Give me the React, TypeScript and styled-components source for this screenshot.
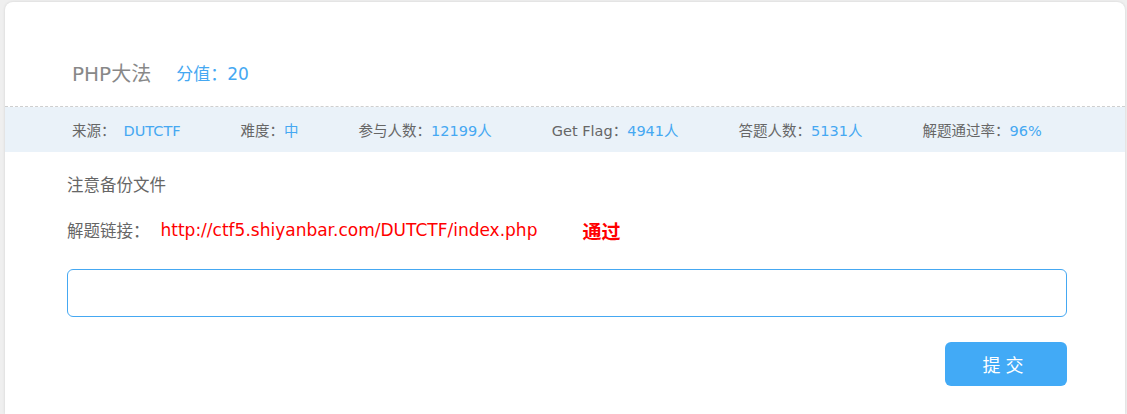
import styled, { createGlobalStyle } from 'styled-components';

const GlobalStyle = createGlobalStyle`
  html, body {
    margin: 0;
    padding: 0;
    background: #efefef;
    font-family: "DejaVu Sans", "Noto Sans CJK SC", sans-serif;
  }
`;

const Page = styled.div`
  padding: 2px 0 0 5px;
  height: 412px;
  overflow: hidden;
`;

const Card = styled.div`
  background: #fff;
  border-radius: 8px 8px 0 0;
  box-shadow: 0 0 3px rgba(0, 0, 0, 0.12);
  height: 100%;
  width: 1120px;
`;

const Header = styled.div`
  display: flex;
  align-items: center;
  gap: 25px;
  padding: 37px 0 0 67px;
  height: 67px;
  border-bottom: 1px dashed #cfcfcf;
`;

const Title = styled.span`
  font-size: 20px;
  color: #888;
`;

const Score = styled.span`
  font-size: 17px;
  color: #45a8f2;
`;

const InfoBar = styled.div`
  display: flex;
  align-items: center;
  height: 45px;
  padding-left: 67px;
  background: #eaf2f9;
  font-size: 14.5px;
`;

const InfoItem = styled.div`
  margin-right: 60px;
  color: #666;
  white-space: nowrap;
`;

const Value = styled.span<{ $gap?: boolean }>`
  color: #45a8f2;
  margin-left: ${(p) => (p.$gap ? '8px' : '0')};
`;

const Body = styled.div`
  padding: 20px 0 0 62px;
`;

const Note = styled.div`
  font-size: 16.5px;
  color: #666;
  height: 24px;
`;

const LinkRow = styled.div`
  display: flex;
  align-items: center;
  margin-top: 22px;
  font-size: 16.5px;
  color: #666;
  height: 24px;
`;

const Link = styled.a`
  color: #ff0000;
  text-decoration: none;
  font-size: 17px;
  margin-left: 11px;
`;

const Pass = styled.span`
  color: #ff0000;
  font-weight: bold;
  font-size: 19px;
  margin-left: 45px;
`;

const FlagInput = styled.input`
  display: block;
  box-sizing: border-box;
  width: 1000px;
  height: 48px;
  margin-top: 27px;
  border: 1px solid #45a8f2;
  border-radius: 6px;
  outline: none;
  font-size: 16px;
  padding: 0 12px;
`;

const Actions = styled.div`
  display: flex;
  justify-content: flex-end;
  width: 1000px;
  margin-top: 25px;
`;

const Submit = styled.button`
  width: 122px;
  height: 44px;
  border: none;
  border-radius: 6px;
  background: #42aaf6;
  color: #fff;
  font-family: inherit;
  font-size: 18px;
  letter-spacing: 5px;
  padding-left: 5px;
  cursor: pointer;
`;

export default function App() {
  return (
    <>
      <GlobalStyle />
      <Page>
        <Card>
          <Header>
            <Title>PHP大法</Title>
            <Score>分值：20</Score>
          </Header>
          <InfoBar>
            <InfoItem>
              来源：<Value $gap>DUTCTF</Value>
            </InfoItem>
            <InfoItem>
              难度：<Value>中</Value>
            </InfoItem>
            <InfoItem>
              参与人数：<Value>12199人</Value>
            </InfoItem>
            <InfoItem>
              Get Flag：<Value>4941人</Value>
            </InfoItem>
            <InfoItem>
              答题人数：<Value>5131人</Value>
            </InfoItem>
            <InfoItem>
              解题通过率：<Value>96%</Value>
            </InfoItem>
          </InfoBar>
          <Body>
            <Note>注意备份文件</Note>
            <LinkRow>
              解题链接：
              <Link href="#">http://ctf5.shiyanbar.com/DUTCTF/index.php</Link>
              <Pass>通过</Pass>
            </LinkRow>
            <FlagInput type="text" />
            <Actions>
              <Submit>提交</Submit>
            </Actions>
          </Body>
        </Card>
      </Page>
    </>
  );
}
